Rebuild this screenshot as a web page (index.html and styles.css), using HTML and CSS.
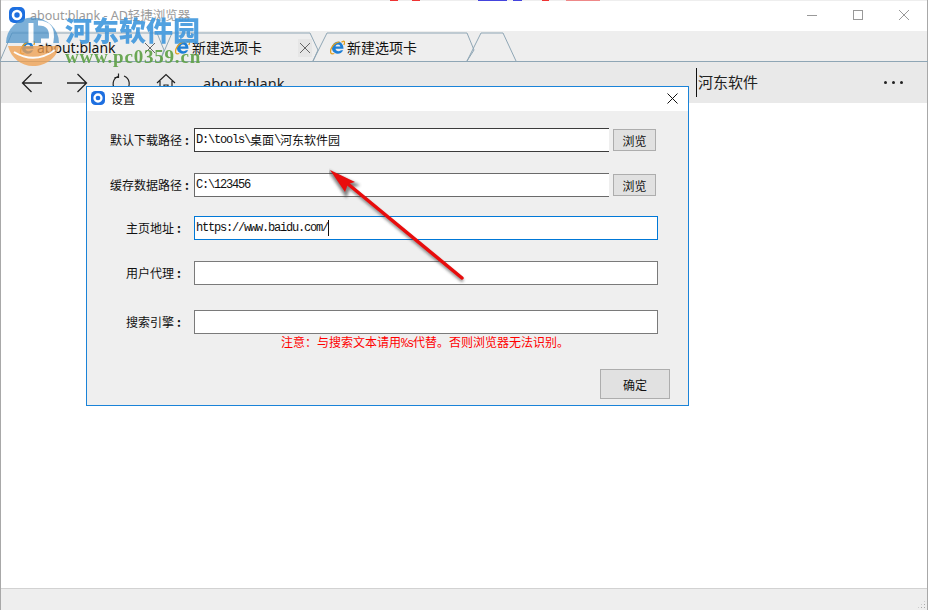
FILE: index.html
```html
<!DOCTYPE html>
<html lang="zh-CN">
<head>
    <meta charset="UTF-8">
    <title>about:blank - AD轻捷浏览器</title>
    <link rel="stylesheet" href="styles.css">
</head>
<body>

<div class="window">
    <div class="titlebar">
        <svg class="app-icon" width="16" height="16" viewBox="0 0 16 16"><rect width="16" height="16" rx="5" fill="#1d6fe0"/><circle cx="8" cy="8" r="4" fill="none" stroke="#fff" stroke-width="2.6"/></svg>
        <span class="window-title">about:blank - AD轻捷浏览器</span>
        <div class="window-buttons">
            <svg width="12" height="12" viewBox="0 0 12 12"><path d="M1 6.500H11" stroke="#999" fill="none"/></svg>
            <svg width="12" height="12" viewBox="0 0 12 12"><rect x="1.500" y="1.500" width="9" height="9" stroke="#999" fill="none"/></svg>
            <svg width="12" height="12" viewBox="0 0 12 12"><path d="M1 1L11 11M11 1L1 11" stroke="#999" fill="none"/></svg>
        </div>
    </div>

    <div class="tabstrip">
        <!-- tab outlines sit behind the tabs -->
        <svg class="tab-lines" width="928" height="31" viewBox="0 0 928 31">
            <path d="M0 30L12 2H157L164 19L160 30M172 2L160 30M172 2H310L318 19L313 30L327 2H467L474 19L467 30L481 2H503L516 30M0 30.500H928" fill="none" stroke="#8fa6b5"/>
        </svg>
        <div class="tab">
            <svg class="ie-icon" width="15" height="15" viewBox="0 0 15 15"><use href="#ie"/></svg>
            <span>about:blank</span>
            <svg class="tab-close" width="14" height="18" viewBox="0 0 14 18"><path d="M2 4L12 14M12 4L2 14" fill="none" stroke="#666"/></svg>
        </div>
        <div class="tab">
            <svg class="ie-icon" width="15" height="15" viewBox="0 0 15 15"><use href="#ie"/></svg>
            <span>新建选项卡</span>
            <svg class="tab-close hot" width="14" height="18" viewBox="0 0 14 18"><path d="M2 4L12 14M12 4L2 14" fill="none" stroke="#666"/></svg>
        </div>
        <div class="tab">
            <svg class="ie-icon" width="15" height="15" viewBox="0 0 15 15"><use href="#ie"/></svg>
            <span>新建选项卡</span>
        </div>
    </div>

    <div class="navbar">
        <svg class="nav-icon" width="22" height="20" viewBox="0 0 22 20"><path d="M21 10H1.500M10.500 1L1.500 10L10.500 19" fill="none" stroke="#222" stroke-width="1.300"/></svg>
        <svg class="nav-icon" width="22" height="20" viewBox="0 0 22 20"><path d="M1 10H20.500M11.500 1L20.500 10L11.500 19" fill="none" stroke="#222" stroke-width="1.300"/></svg>
        <svg class="nav-icon" width="20" height="20" viewBox="0 0 20 20"><path d="M7 3.500A8 8 0 0 0 5 17M13 3A8 8 0 0 1 15.500 16.500M7.500 0.500V4.500H3.500M12.500 19.500V15.500H16.500" fill="none" stroke="#222" stroke-width="1.200"/></svg>
        <svg class="nav-icon" width="20" height="20" viewBox="0 0 20 20"><path d="M1 10L10 1.500L19 10M4 8V18H8V12H12V18H16V8" fill="none" stroke="#222" stroke-width="1.200"/></svg>
        <span class="address">about:blank</span>
        <div class="search">河东软件</div>
        <div class="more"><i></i><i></i><i></i></div>
    </div>

    <div class="content"></div>

    <div class="statusbar">
        <div class="grip"></div>
    </div>
</div>

<svg class="defs" width="0" height="0">
    <defs>
        <g id="ie">
            <path d="M2 8.500C2 4.200 4.800 1.800 8 1.800C11.200 1.800 13.500 4.500 13.500 8.800H5.500C5.800 11.500 9 12 11 10.300L13.200 10.300C11.200 14.200 7 14.700 4.300 12.600C2.800 11.400 2 10 2 8.500ZM5.500 6.600H10.400C10 3.800 6 3.800 5.500 6.600Z" fill="#1f7fd6"/>
            <path d="M11.500 2.300C14 0 15.500 1.500 13.800 5M9.500 1.800C5.500 2.500 2.300 5.500 1 9C-0.200 12.800 1 14.800 4.300 13.500" fill="none" stroke="#e2a020" stroke-width="1.300"/>
        </g>
    </defs>
</svg>

<!-- settings dialog -->
<div class="dialog">
    <div class="dialog-head">
        <svg class="app-icon" width="14" height="14" viewBox="0 0 16 16"><rect width="16" height="16" rx="5" fill="#1d6fe0"/><circle cx="8" cy="8" r="4" fill="none" stroke="#fff" stroke-width="2.6"/></svg>
        <span class="dialog-title">设置</span>
        <svg class="dialog-close" width="11" height="11" viewBox="0 0 11 11"><path d="M0.500 0.500L10.500 10.500M10.500 0.500L0.500 10.500" fill="none" stroke="#111"/></svg>
    </div>
    <div class="dialog-body">
        <div class="form-row row-path">
            <label class="form-label">默认下载路径<span class="colon">:</span></label>
            <div class="field path"><span class="lat">D:\tools\</span>桌面<span class="lat">\</span>河东软件园</div>
            <button class="browse">浏览</button>
        </div>
        <div class="form-row row-cache">
            <label class="form-label">缓存数据路径<span class="colon">:</span></label>
            <div class="field path soft"><span class="lat">C:\123456</span></div>
            <button class="browse">浏览</button>
        </div>
        <div class="form-row row-home">
            <label class="form-label short">主页地址<span class="colon">:</span></label>
            <div class="field wide focus"><span class="lat">https://www.baidu.com/</span><span class="caret"></span></div>
        </div>
        <div class="form-row row-agent">
            <label class="form-label short">用户代理<span class="colon">:</span></label>
            <div class="field wide"></div>
        </div>
        <div class="form-row row-engine">
            <label class="form-label short">搜索引擎<span class="colon">:</span></label>
            <div class="field wide"></div>
        </div>
        <div class="notice">注意：与搜索文本请用<span class="lat">%s</span>代替。否则浏览器无法识别。</div>
        <div class="dialog-foot">
            <button class="ok">确定</button>
        </div>
    </div>
</div>

<!-- annotation arrow over the dialog -->
<svg class="arrow" width="150" height="125" viewBox="0 0 150 125">
    <defs>
        <filter id="soft" x="-20%" y="-20%" width="140%" height="140%"><feGaussianBlur stdDeviation="1.400"/></filter>
    </defs>
    <path d="M133 110L19 16M1 2L26 14L19 16L16 24Z" fill="#333" stroke="#333" stroke-width="3" opacity="0.6" filter="url(#soft)" transform="translate(1 3)"/>
    <path d="M133 110L19 16" stroke="#e80c0c" stroke-width="3.500" stroke-linecap="round"/>
    <path d="M1 2L26 14L19 16L16 24Z" fill="#e80c0c"/>
</svg>

<!-- site watermark -->
<div class="watermark">
    <svg class="wm-logo" width="56" height="50" viewBox="0 0 56 50">
        <path d="M1 26A26 25 0 0 1 54 26Z" fill="#4a92c9" opacity="0.85"/>
        <path d="M3 29H54C52 41 41 49 28 49C16 49 6 41 3 29Z" fill="#f0a050" opacity="0.9"/>
        <path d="M26 6V26M33 6C44 6 48 12 46 24H36" fill="none" stroke="#fff" stroke-width="5"/>
        <path d="M9 35C22 43 36 43 50 33" fill="none" stroke="#fff" stroke-width="2"/>
    </svg>
    <div class="wm-text">
        <div class="wm-name">河东软件园</div>
        <div class="wm-url">www.pc0359.cn</div>
    </div>
</div>

</body>
</html>
```

FILE: styles.css
```css
* {
    margin: 0;
    padding: 0;
    box-sizing: border-box;
}

html, body {
    width: 928px;
    height: 611px;
    overflow: hidden;
    background-color: #fff;
}

body {
    font-family: "Noto Sans", "Noto Sans CJK SC", sans-serif;
    color: #111;
}

.window {
    width: 928px;
    height: 610px;
    display: flex;
    flex-direction: column;
    border-left: 1px solid #a8a8a8;
    border-right: 1px solid #a8a8a8;
}

.titlebar {
    height: 31px;
    display: flex;
    align-items: center;
    padding: 0 0 2px 8px;
    background: linear-gradient(90deg, #eee 389px, #e33 389px, #e33 397px, #eee 397px, #eee 411px, #e33 411px, #e33 419px, #eee 419px, #eee 477px, #44d 477px, #44d 506px, #eee 506px, #eee 512px, #44d 512px, #44d 521px, #eee 521px, #eee 541px, #e33 541px, #e33 548px, #eee 548px, #eee 565px, #e88 565px, #e88 599px, #eee 599px) top left / 100% 1px no-repeat #fff;
}

.window-title {
    margin-left: 5px;
    font-size: 12.500px;
    color: #9a9a9a;
}

.window-buttons {
    margin-left: auto;
    display: flex;
    gap: 34px;
    padding-right: 17px;
}

.tabstrip {
    position: relative;
    height: 31px;
    display: flex;
    padding-left: 19px;
    background-color: #eee;
}

.tab-lines {
    position: absolute;
    left: -1px;
    top: 0;
}

.tab {
    position: relative;
    width: 155px;
    display: flex;
    align-items: center;
    gap: 2px;
    padding-top: 2px;
    font-size: 14px;
    line-height: 18px;
    color: #111;
}

.tab-close {
    position: absolute;
    left: 123px;
    top: 8px;
}

.tab-close.hot {
    background-color: #e6e6e6;
}

.navbar {
    height: 41px;
    display: flex;
    align-items: center;
    padding-left: 20px;
    background-color: #e9e9e9;
}

.nav-icon {
    flex: none;
    margin-right: 23px;
}

.nav-icon + .nav-icon + .nav-icon {
    margin-right: 25px;
}

.address {
    width: 493px;
    margin-left: 2px;
    padding-top: 1px;
    font-size: 14.500px;
    color: #222;
}

.search {
    height: 29px;
    width: 160px;
    padding-left: 1px;
    border-left: 1px solid #111;
    font-size: 15px;
    line-height: 29px;
    color: #222;
}

.more {
    margin-left: 28px;
    display: flex;
    gap: 5px;
}

.more i {
    width: 3px;
    height: 3px;
    border-radius: 50%;
    background-color: #222;
}

.content {
    flex: 1;
    background-color: #fff;
}

.statusbar {
    height: 22px;
    display: flex;
    justify-content: flex-end;
    align-items: flex-end;
    padding: 0 1px 1px 0;
    border-top: 1px solid #d2d2d2;
    background-color: #eee;
}

.grip {
    width: 9px;
    height: 9px;
    background: radial-gradient(circle, #aaa 1px, transparent 1px) 0 0 / 3px 3px;
    clip-path: polygon(100% 0, 100% 100%, 0 100%);
}

.defs {
    position: absolute;
}

/* dialog floats over the browser window */
.dialog {
    position: absolute;
    left: 86px;
    top: 86px;
    width: 603px;
    height: 320px;
    display: flex;
    flex-direction: column;
    border: 1px solid #1a83d8;
    background-color: #efefef;
    font-family: "Noto Sans CJK SC", sans-serif;
    font-size: 12px;
}

.dialog-head {
    height: 24px;
    flex: none;
    display: flex;
    align-items: center;
    padding: 0 10px 2px 4px;
    background-color: #fff;
}

.dialog-title {
    margin-left: 6px;
}

.dialog-close {
    margin-left: auto;
}

.dialog-body {
    flex: 1;
    display: flex;
    flex-direction: column;
}

.form-row {
    height: 24px;
    display: flex;
    align-items: center;
    flex: none;
}

.row-path { margin-top: 17px; }
.row-cache { margin-top: 21px; }
.row-home { margin-top: 19px; }
.row-agent { margin-top: 21px; }
.row-engine { margin-top: 25px; }

.form-label {
    width: 107px;
    padding: 0 5px 2px 0;
    text-align: right;
    white-space: nowrap;
}

.form-label.short {
    padding-right: 13px;
}

.colon {
    margin-left: 3px;
    font-weight: 700;
}

.field {
    height: 24px;
    display: flex;
    align-items: center;
    padding-left: 1px;
    border: 1px solid #7a7a7a;
    background-color: #fff;
    white-space: pre;
    line-height: 20px;
}

.field.path {
    width: 415px;
    border-width: 1px 0 1px 1px;
    border-color: #3c3c3c;
}

.field.soft {
    border-color: #6a6a6a;
}

.field.wide {
    width: 464px;
}

.field.focus {
    border-color: #0078d7;
}

.lat {
    font-family: "Liberation Mono", monospace;
    font-size: 12px;
    letter-spacing: -1.200px;
}

.caret {
    width: 1px;
    height: 16px;
    background-color: #111;
}

.browse {
    width: 43px;
    height: 22px;
    margin-left: 4px;
    border: 1px solid #adadad;
    background-color: #e1e1e1;
    font-family: inherit;
    font-size: 12px;
    color: #111;
}

.notice {
    height: 14px;
    margin-top: 1px;
    padding-left: 194px;
    line-height: 14px;
    color: #f00;
    white-space: nowrap;
}

.dialog-foot {
    display: flex;
    justify-content: flex-end;
    margin-top: 20px;
    padding-right: 18px;
}

.ok {
    width: 70px;
    height: 30px;
    border: 1px solid #adadad;
    background-color: #e1e1e1;
    font-family: inherit;
    font-size: 12px;
    color: #111;
}

.arrow {
    position: absolute;
    left: 329px;
    top: 168px;
}

.watermark {
    position: absolute;
    left: 5px;
    top: 14px;
    display: flex;
    gap: 4px;
    pointer-events: none;
}

.wm-logo {
    flex: none;
    margin-top: 3px;
    opacity: 0.85;
}

.wm-name {
    font-family: "Noto Sans CJK SC", sans-serif;
    font-size: 27px;
    font-weight: 900;
    line-height: 32px;
    color: #3f97dd;
    opacity: 0.9;
}

.wm-url {
    margin-top: 2px;
    font-family: "Liberation Serif", serif;
    font-size: 19px;
    font-weight: 700;
    letter-spacing: 0.800px;
    line-height: 18px;
    color: #5da044;
    opacity: 0.9;
}
```
